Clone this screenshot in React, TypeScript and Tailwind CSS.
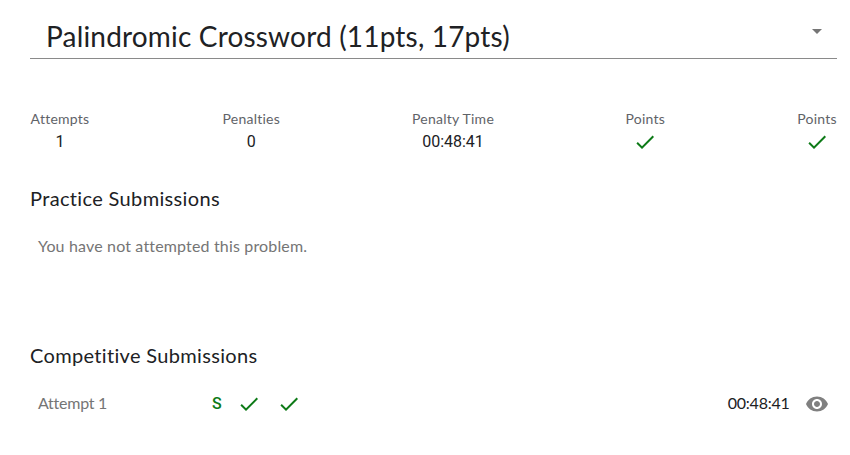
import { MdArrowDropDown, MdCheck, MdVisibility } from "react-icons/md";
import type { ReactNode } from "react";

function Stat({ label, width, children }: { label: string; width: string; children: ReactNode }) {
  return (
    <div className={`flex flex-col items-center ${width}`}>
      <span className="h-[21px] whitespace-nowrap text-[14px] leading-5 tracking-[0.25px] text-[#5f6368]">{label}</span>
      <div className="flex h-6 items-center justify-center font-['Roboto',sans-serif] text-base leading-6">{children}</div>
    </div>
  );
}

function Check() {
  return <MdCheck className="size-6 text-[#0d7a17]" />;
}

export default function App() {
  return (
    <main className="h-[455px] w-[850px] bg-white pr-[13px] pl-[30px] font-['Lato',sans-serif] text-[#202124]">
      <div className="flex h-[59px] items-center justify-between border-b border-[#8a8a8a] pt-[14px] pr-2 pl-4">
        <h1 className="text-[28px] leading-8 tracking-[0.18px] whitespace-nowrap">Palindromic Crossword (11pts, 17pts)</h1>
        <MdArrowDropDown className="mb-2.5 size-6 text-[#757575]" />
      </div>
      <section className="mt-[50px] flex justify-between">
        <Stat label="Attempts" width="w-[60px]">1</Stat>
        <Stat label="Penalties" width="w-[58px]">0</Stat>
        <Stat label="Penalty Time" width="w-[81px]">00:48:41</Stat>
        <Stat label="Points" width="w-[39px]"><Check /></Stat>
        <Stat label="Points" width="w-10"><Check /></Stat>
      </section>
      <h2 className="mt-[32px] text-[20px] leading-6 tracking-[0.35px]">Practice Submissions</h2>
      <p className="mt-[24px] pl-2 text-[16px] leading-6 tracking-[0.16px] text-[#757575]">You have not attempted this problem.</p>
      <h2 className="mt-[85px] text-[20px] leading-6 tracking-[0.33px]">Competitive Submissions</h2>
      <div className="mt-[25px] flex h-6 items-center pl-2 text-[16px]">
        <span className="mb-0.5 w-[174px] tracking-[-0.25px] text-[#757575]">Attempt 1</span>
        <span className="w-[25px] font-['Roboto',sans-serif] font-medium text-[#0d7a17]">S</span>
        <span className="w-10"><Check /></span>
        <Check />
        <span className="mr-[15px] mb-0.5 ml-auto tracking-[-0.25px]">00:48:41</span>
        <MdVisibility className="mr-[8.5px] size-6 text-[#808080]" />
      </div>
    </main>
  );
}
